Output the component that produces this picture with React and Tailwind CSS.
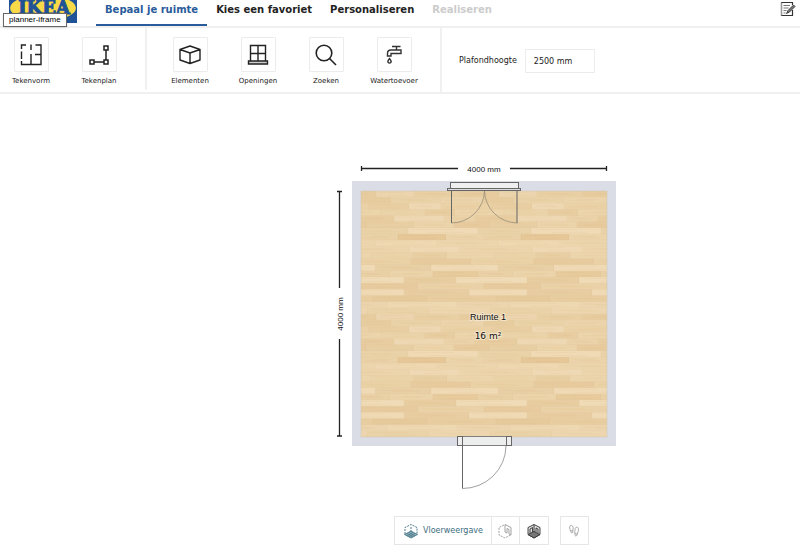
import { useState } from "react";
import clsx from "clsx";

const TABS = [
  { label: "Bepaal je ruimte", active: true },
  { label: "Kies een favoriet" },
  { label: "Personaliseren" },
  { label: "Realiseren", disabled: true },
];

const ROOM = 246;
const TILE = 123;
const ROW = TILE / 20;

// One parquet tile: a row per line, each plank is [x, width, colour]
const PLANK_ROWS = [
  [[15, 38, "#ecd5ae"], [53, 46, "#e9cfa4"], [99, 39, "#e7cc9f"]],
  [[0, 30, "#e7cc9f"], [30, 50, "#ead2a8"], [80, 43, "#ebd3ab"]],
  [[8, 40, "#e8cea2"], [48, 32, "#eed8b3"], [80, 51, "#ead1a6"]],
  [[20, 44, "#ebd3a9"], [64, 30, "#e8cda1"], [94, 49, "#ecd4ab"]],
  [[33, 50, "#eed8b3"], [83, 31, "#ebd2a9"], [114, 42, "#e8cda1"]],
  [[5, 48, "#e8cea3"], [53, 40, "#ebd3aa"], [93, 35, "#e7cb9e"]],
  [[47, 70, "#f0dab6"], [117, 53, "#ead2a8"]],
  [[37, 48, "#e5c798"], [85, 38, "#ebd3aa"], [0, 37, "#ead1a7"]],
  [[14, 62, "#eed7b1"], [76, 61, "#ecd5ad"]],
  [[48, 50, "#efd9b4"], [98, 73, "#ecd4ac"]],
  [[10, 42, "#ebd3a9"], [52, 34, "#e8cea3"], [86, 47, "#ecd5ad"]],
  [[50, 60, "#e7cb9e"], [110, 63, "#ead1a6"]],
  [[70, 67, "#f0dab6"], [14, 56, "#e9cfa5"]],
  [[72, 45, "#e7cb9d"], [117, 35, "#e9d0a5"], [29, 43, "#ebd3aa"]],
  [[95, 71, "#f0dbb7"], [43, 52, "#e8cda1"]],
  [[0, 57, "#e7cb9e"], [57, 66, "#ead1a7"]],
  [[108, 58, "#f0dab5"], [43, 65, "#e8cda2"]],
  [[12, 54, "#e6ca9c"], [66, 69, "#e8cda1"]],
  [[26, 70, "#eed8b2"], [96, 53, "#ecd5ae"]],
  [[6, 62, "#ebd3a9"], [68, 61, "#edd6af"]],
];

function ShapeIcon() {
  return (
    <svg className="size-6" viewBox="0 0 24 24" fill="none" stroke="#222" strokeWidth="1.4">
      <path d="M7 2H2.500V6M2.500 8.500V16M2.500 18V21.500H22V2H16.500M12 1.500V7M12 11V21.500M22 11.500H16" />
    </svg>
  );
}

function PlanIcon() {
  return (
    <svg className="size-6" viewBox="0 0 24 24" fill="none" stroke="#222" strokeWidth="1.5">
      <path d="M17 3h4v4h-4zM17 17h4v4h-4zM3 17h4v4H3zM19 7v10M7 19h10" />
    </svg>
  );
}

function BoxIcon() {
  return (
    <svg className="size-6" viewBox="0 0 24 24" fill="none" stroke="#222" strokeWidth="1.4" strokeLinejoin="round">
      <path d="M12 3L22 6.500V17L12 20.500 2 17V6.500zM2 6.500L12 10 22 6.500M12 10V20.500" />
    </svg>
  );
}

function WindowIcon() {
  return (
    <svg className="size-6" viewBox="0 0 24 24" fill="none" stroke="#222" strokeWidth="1.4">
      <path d="M4.500 18V2.500H19.500V18M12 2.500V18M4.500 10.500H19.500" />
      <path d="M2.500 18H21.500V21H2.500z" fill="#ccc" />
    </svg>
  );
}

function SearchIcon() {
  return (
    <svg className="size-6" viewBox="0 0 24 24" fill="none" stroke="#222" strokeWidth="1.6">
      <circle cx="10" cy="10" r="7.800" />
      <path d="M15.500 15.500L22 22" />
    </svg>
  );
}

function TapIcon() {
  return (
    <svg className="size-6" viewBox="0 0 24 24" fill="none" stroke="#333" strokeWidth="1.4">
      <path d="M10 3.500H18.500M14.500 3.500V7M19 7H9Q5.500 7 5.500 10.500V13H9V10.500H19z" />
      <path d="M7.500 15.500Q5.500 18 6 19.200 7.500 21 9 19.200 9.500 18 7.500 15.500z" />
    </svg>
  );
}

function NotesIcon() {
  return (
    <svg className="h-4 w-4" viewBox="0 0 16 16" fill="none" stroke="#333" strokeWidth="1.2">
      <path d="M12.500 9V14.500H1.500V1.500H12.500V4" />
      <path d="M1.500 1.500V14.500" stroke="#999" />
      <path d="M3.500 4.500H10M3.500 7H8.500M3.500 9.500H6.500M3.500 12H5.500" stroke="#777" />
      <path d="M6.500 12.500L8 9.500 13.500 4 15 5.500 9.500 11z" fill="#777" strokeWidth=".9" />
    </svg>
  );
}

function FloorViewIcon() {
  return (
    <svg className="size-4" viewBox="0 0 16 16" fill="none" stroke="#3c6e80">
      <path d="M2 11V4.500L8 1.500 14 4.500V11M8 4v5" strokeWidth=".9" strokeDasharray="2 1" />
      <path d="M8 8L14.500 11.500 8 15 1.500 11.500z" fill="#8fb0bb" strokeWidth=".8" />
      <path d="M4 10.500l6 3.500M6 9.500l6 3.500M12 10.500L6 14M10 9.500L4 13" strokeWidth=".6" />
    </svg>
  );
}

function HalfViewIcon() {
  return (
    <svg className="size-4" viewBox="0 0 16 16" fill="none" stroke="#999" strokeWidth=".9">
      <path d="M7 2L2 4.500V12L8 15l5.500-3" strokeDasharray="2 1" />
      <path d="M8 9V1.500L14 4.500V12L12 11V6.500L10 5.500V10z" />
    </svg>
  );
}

function FullViewIcon() {
  return (
    <svg className="size-4" viewBox="0 0 16 16" fill="none" stroke="#333" strokeWidth=".9">
      <path d="M8 1.500L14 4.500V11.500L8 15 2 11.500V4.500z" fill="#ddd" />
      <path d="M8 8.500L14 11.500 8 15 2 11.500z" fill="#777" />
      <path d="M8 1.500V9M4 10V6l2.500-1.500V9M10 9V5l2 1v4" />
    </svg>
  );
}

function FeetIcon() {
  return (
    <svg className="size-4" viewBox="0 0 16 16" fill="none" stroke="#999" strokeWidth=".8">
      <path d="M4.500 2.500C6.500 2 7.500 4 7 6.500L6.800 9.500Q6 10.500 5.200 9.500L4 6.500Q2.800 3.500 4.500 2.500zM4.500 7.800H7" />
      <path d="M10.500 4C12.500 4 13 6.500 12 9L10.800 12.500Q9.800 13.500 9 12.500L8.800 8.500Q8.800 4.500 10.500 4zM9 10.500L11.500 11" />
    </svg>
  );
}

function Tool({ label, icon }) {
  return (
    <button className="flex w-[62px] flex-col items-center gap-[5px]">
      <span className="flex size-[35px] items-center justify-center rounded-[1px] border border-[#ececec]">
        {icon}
      </span>
      <span className="text-[7px] leading-[8px] text-[#222]">{label}</span>
    </button>
  );
}

function Logo() {
  return (
    <svg className="h-[23px] w-[68px]" viewBox="0 0 68 23" role="img" aria-label="IKEA">
      <rect width="68" height="23" fill="#1f5296" />
      <ellipse cx="34" cy="8" rx="33" ry="13" fill="#f8d948" />
      <text
        x="35"
        y="14"
        textAnchor="middle"
        fill="#1f5296"
        stroke="#1f5296"
        strokeWidth="1"
        className="font-['DejaVu_Serif',serif] text-[18px] font-bold"
      >
        IKEA
      </text>
    </svg>
  );
}

function Parquet() {
  return (
    <pattern id="parquet" width={TILE} height={TILE} patternUnits="userSpaceOnUse">
      <rect width={TILE} height={TILE} fill="#ead1a7" />
      {PLANK_ROWS.map((row, r) =>
        row.map(([x, w, color], i) =>
          // drawn twice so planks run on over the tile's edge
          [x, x - TILE].map((left) => (
            <g key={`${i}-${left}`}>
              <rect x={left} y={r * ROW} width={w} height={ROW + 0.2} fill={color} />
              <path
                d={`M${left + 4} ${r * ROW + 1.5 + i}h${w * 0.6}M${left + w * 0.3} ${r * ROW + 4.5 - i}h${w * 0.5}`}
                stroke="#cfa970"
                strokeWidth=".5"
                opacity=".22"
              />
              <path
                d={`M${left} ${(r + 1) * ROW}h${w}v${-ROW}`}
                stroke="#c9a469"
                strokeWidth=".4"
                opacity=".25"
              />
            </g>
          ))
        )
      )}
    </pattern>
  );
}

// Origin is the inner top left corner of the room
function FloorPlan() {
  return (
    <svg className="h-[334px] w-[304px]" viewBox="-29 -33 304 334" fill="none">
      <defs>
        <Parquet />
      </defs>
      <rect x="-9" y="-10" width="264" height="265" fill="#dadde5" />
      <rect x="0" y="0" width={ROOM} height={ROOM} fill="url(#parquet)" stroke="#d3c8b6" strokeWidth=".6" />

      {/* Dimensions */}
      <g stroke="#222" strokeWidth="1.3">
        <path d="M0 -22.500H97M149 -22.500H246M.5 -25V-20M245.500 -25V-20" />
        <path d="M-21.500 0V97M-21.500 148V245M-24 .5H-19M-24 245H-19" />
      </g>
      <g fill="#111" textAnchor="middle" className="font-['Liberation_Sans',sans-serif] text-[8px]">
        <text x="123" y="-19">4000 mm</text>
        <text transform="translate(-18 123) rotate(-90)">4000 mm</text>
      </g>

      {/* Double doors */}
      <g stroke="#666">
        <rect x="89.500" y="-8.500" width="68" height="6" fill="#efefef" />
        <rect x="86.500" y="-2.500" width="73" height="2" fill="#ddd" />
        <path d="M90.500 0V32M156 0V32" />
        <path
          d="M123.500 0A33 33 0 0 1 90.500 32M123.500 0A33 33 0 0 0 156.500 32"
          stroke="#998e7a"
          strokeWidth=".8"
        />
      </g>

      {/* Entrance door */}
      <g stroke="#666">
        <rect x="96.500" y="245.500" width="54" height="9" fill="#eceeed" strokeWidth=".8" />
        <rect x="96.500" y="245.500" width="5" height="9" fill="#eee" />
        <rect x="145.500" y="245.500" width="5" height="9" fill="#eee" />
        <path d="M101.500 255V297.500" />
        <path d="M145 255A43.500 43 0 0 1 101.500 297.500" stroke="#888" strokeWidth=".8" />
      </g>

      <g
        fill="#111"
        stroke="#f8ecd8"
        strokeOpacity=".7"
        strokeWidth="2"
        paintOrder="stroke"
        textAnchor="middle"
        className="text-[9px]"
      >
        <text x="127" y="129" className="font-['Liberation_Sans',sans-serif]">
          Ruimte 1
        </text>
        <text x="127" y="148">16 m²</text>
      </g>
    </svg>
  );
}

function App() {
  const [height, setHeight] = useState("2500 mm");

  return (
    <div className="flex min-h-screen flex-col bg-white font-['DejaVu_Sans',sans-serif] text-[#222]">
      <header className="relative flex h-7 items-start border-b-2 border-[#f0f0f0] pl-[9px]">
        <Logo />
        <nav className="ml-[19px] flex h-[26px] text-[10px] leading-3 font-bold">
          {TABS.map((tab) => (
            <a
              key={tab.label}
              href="#"
              aria-disabled={tab.disabled}
              className={clsx(
                "border-b-2 px-[9px] pt-1 whitespace-nowrap",
                tab.active ? "border-[#2a5b9b] text-[#2a5b9b]" : "border-transparent",
                tab.disabled && "text-[#ccc]"
              )}
            >
              {tab.label}
            </a>
          ))}
        </nav>
        <button aria-label="Notities" className="mt-px mr-1 ml-auto">
          <NotesIcon />
        </button>
        <div
          role="tooltip"
          className="absolute top-[13px] left-[3px] z-10 border border-[#666] bg-white px-[5px] font-['Liberation_Sans',sans-serif] text-[8px] leading-3 whitespace-nowrap text-black shadow"
        >
          planner-iframe
        </div>
      </header>

      <section className="flex h-[66px] items-start border-b-2 border-[#f0f0f0]">
        <div className="flex h-[62px] gap-[6px] border-r-2 border-[#f0f0f0] pt-[9px] pr-[15px]">
          <Tool label="Tekenvorm" icon={<ShapeIcon />} />
          <Tool label="Tekenplan" icon={<PlanIcon />} />
        </div>
        <div className="flex h-full gap-[6px] border-r-2 border-[#f0f0f0] pt-[9px] pr-[15px] pl-3">
          <Tool label="Elementen" icon={<BoxIcon />} />
          <Tool label="Openingen" icon={<WindowIcon />} />
          <Tool label="Zoeken" icon={<SearchIcon />} />
          <Tool label="Watertoevoer" icon={<TapIcon />} />
        </div>
        <div className="flex h-full items-center gap-2 pt-0.5 pl-[17px] text-[8px] text-[#222]">
          <label htmlFor="ceiling">Plafondhoogte</label>
          <input
            id="ceiling"
            value={height}
            onChange={(e) => setHeight(e.target.value)}
            className="h-6 w-[70px] border border-[#ececec] px-2 outline-none"
          />
        </div>
      </section>

      <main className="flex flex-1 flex-col items-center pt-16 pl-[168px]">
        <FloorPlan />
        <div className="mt-6 ml-[15px] flex gap-[11px] text-[8px]">
          <div className="flex h-[29px] divide-x divide-[#e6e6e6] border border-[#e6e6e6]">
            <button className="flex items-center gap-1 px-2 text-[#3c6e80]">
              <FloorViewIcon />
              Vloerweergave
            </button>
            <button aria-label="Halve muren" className="flex w-7 items-center justify-center">
              <HalfViewIcon />
            </button>
            <button aria-label="Volledige muren" className="flex w-7 items-center justify-center">
              <FullViewIcon />
            </button>
          </div>
          <button
            aria-label="Rondlopen"
            className="flex size-[29px] items-center justify-center border border-[#e6e6e6]"
          >
            <FeetIcon />
          </button>
        </div>
      </main>
    </div>
  );
}

export default App;
